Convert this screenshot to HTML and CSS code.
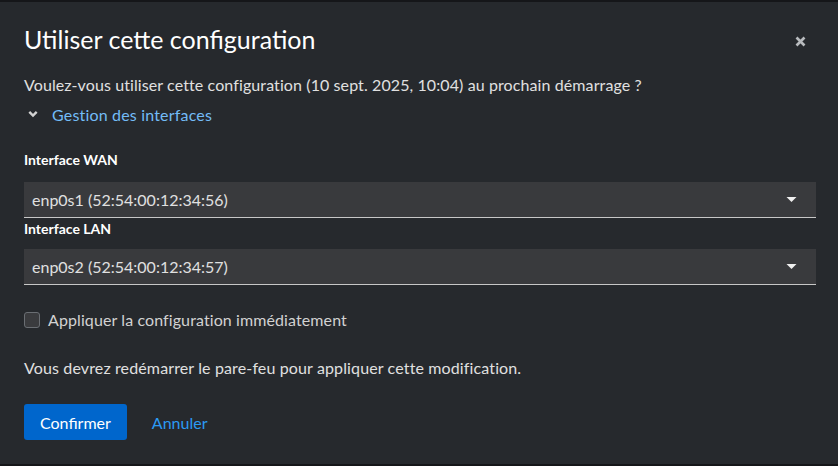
FILE: index.html
```html
<!DOCTYPE html>
<html lang="fr">
<head>
<meta charset="utf-8">
<title>Utiliser cette configuration</title>
<link rel="stylesheet" href="styles.css">
</head>
<body>
<div class="modal">
  <header class="modal-header">
    <h1 class="modal-title">Utiliser cette configuration</h1>
    <button class="close" aria-label="Fermer">
      <svg width="11" height="11" viewBox="0 0 11 11"><path d="M1.5 1.5 L9.5 9.5 M9.5 1.5 L1.5 9.5" stroke="#b8bbbe" stroke-width="2.6" stroke-linecap="butt"/></svg>
    </button>
  </header>
  <div class="modal-body">
    <p class="question">Voulez-vous utiliser cette configuration (10 sept. 2025, 10:04) au prochain démarrage ?</p>
    <div class="expander">
      <svg class="chev" width="10" height="8" viewBox="0 0 10 8"><path d="M1.3 1.8 L5 5.5 L8.7 1.8" fill="none" stroke="#d2d2d2" stroke-width="2.4"/></svg>
      <span class="expander-text">Gestion des interfaces</span>
    </div>
    <div class="field field-wan">
      <label class="label">Interface WAN</label>
      <div class="select">
        <span>enp0s1 (52:54:00:12:34:56)</span>
        <svg width="11" height="7" viewBox="0 0 11 7"><path d="M0.5 1 H10.5 L5.5 6 Z" fill="#f0f0f0"/></svg>
      </div>
    </div>
    <div class="field field-lan">
      <label class="label">Interface LAN</label>
      <div class="select">
        <span>enp0s2 (52:54:00:12:34:57)</span>
        <svg width="11" height="7" viewBox="0 0 11 7"><path d="M0.5 1 H10.5 L5.5 6 Z" fill="#f0f0f0"/></svg>
      </div>
    </div>
    <div class="check">
      <span class="box"></span>
      <span class="check-text">Appliquer la configuration immédiatement</span>
    </div>
    <p class="note">Vous devrez redémarrer le pare-feu pour appliquer cette modification.</p>
  </div>
  <footer class="modal-footer">
    <button class="btn-primary">Confirmer</button>
    <button class="btn-link">Annuler</button>
  </footer>
</div>
</body>
</html>
```

FILE: styles.css
```css
html, body {
  margin: 0;
  padding: 0;
}
body {
  background: #151619;
  width: 838px;
  height: 466px;
  overflow: hidden;
  font-family: "Lato", "Liberation Sans", sans-serif;
  color: #e0e0e0;
}
.modal {
  margin-top: 2px;
  height: 462px;
  background: #26292d;
  display: flex;
  flex-direction: column;
  box-sizing: border-box;
  padding: 22px 22px 0 24px;
}
.modal-header {
  display: flex;
  justify-content: space-between;
  align-items: center;
}
.modal-title {
  margin: 0;
  font-size: 25px;
  font-weight: 400;
  line-height: 30px;
  color: #ffffff;
}
.close {
  background: none;
  border: 0;
  padding: 0;
  margin-right: 10px;
  margin-top: 4px;
  width: 11px;
  height: 11px;
  display: flex;
}
.modal-body {
  display: flex;
  flex-direction: column;
}
.question {
  margin: 19px 0 0;
  font-size: 16px;
  letter-spacing: 0.1px;
  line-height: 24px;
  color: #e0e0e0;
}
.expander {
  display: flex;
  align-items: center;
  margin-top: 5px;
  height: 24px;
}
.chev {
  margin-left: 4px;
  margin-right: 14px;
}
.expander-text {
  color: #73bcf7;
  font-size: 16px;
  letter-spacing: 0.18px;
}
.field {
  display: flex;
  flex-direction: column;
}
.field-wan {
  margin-top: 23px;
}
.label {
  font-size: 14px;
  font-weight: 700;
  line-height: 21px;
  color: #ffffff;
  margin-bottom: 12px;
}
.field-lan .label {
  margin-bottom: 10px;
}
.select {
  height: 35px;
  background: #393a3d;
  border-bottom: 1px solid #c7c7c7;
  display: flex;
  align-items: center;
  justify-content: space-between;
  padding: 0 19px 0 8px;
  font-size: 16px;
  color: #e0e0e0;
}
.check {
  display: flex;
  align-items: center;
  margin-top: 25px;
}
.box {
  width: 14px;
  height: 14px;
  border: 1px solid #6a6e73;
  border-radius: 3px;
  background: #3a3b3e;
  margin-right: 8px;
}
.check-text {
  font-size: 16px;
  letter-spacing: 0.1px;
  color: #d2d2d2;
}
.note {
  margin: 27px 0 0;
  font-size: 16px;
  letter-spacing: 0.13px;
  line-height: 24px;
  color: #e0e0e0;
}
.modal-footer {
  display: flex;
  align-items: center;
  margin-top: 24px;
  gap: 25px;
}
.btn-primary {
  background: #0066cc;
  color: #ffffff;
  border: 0;
  border-radius: 3px;
  height: 36px;
  padding: 0 16px;
  font-family: inherit;
  font-size: 16px;
}
.btn-link {
  background: none;
  border: 0;
  padding: 0;
  color: #2b9af3;
  font-family: inherit;
  font-size: 16px;
}
```
